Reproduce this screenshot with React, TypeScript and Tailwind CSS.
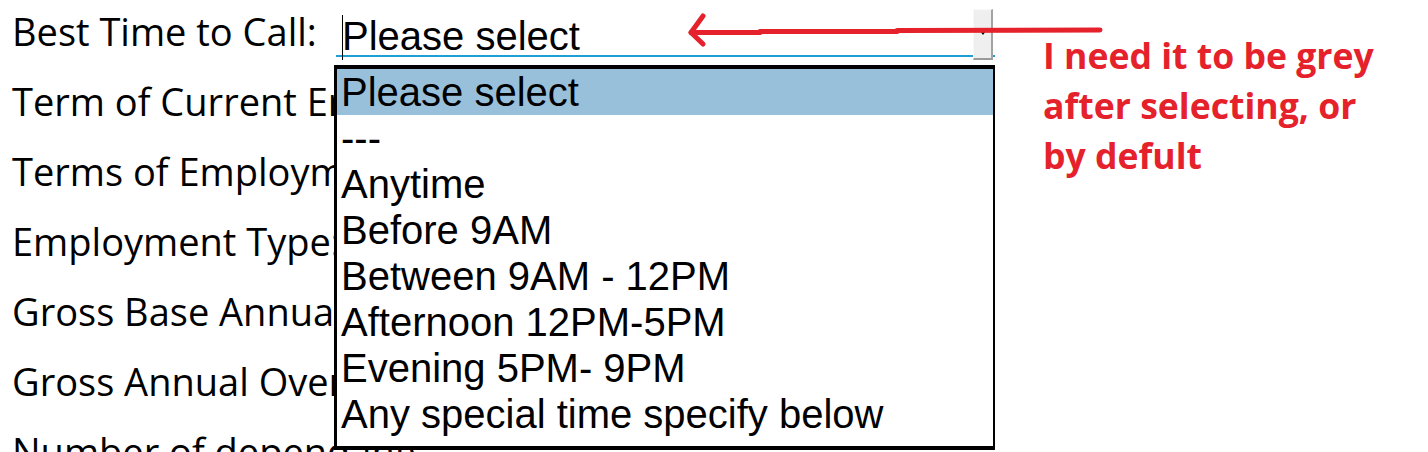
import React from 'react';

const labels = [
  'Best Time to Call:',
  'Term of Current Employment:',
  'Terms of Employment:',
  'Employment Type:',
  'Gross Base Annual Income:',
  'Gross Annual Overtime:',
  'Number of dependants:',
];

const options = [
  'Please select',
  '---',
  'Anytime',
  'Before 9AM',
  'Between 9AM - 12PM',
  'Afternoon 12PM-5PM',
  'Evening 5PM- 9PM',
  'Any special time specify below',
];

const arial = { fontFamily: '"Liberation Sans", Arial, sans-serif' };
const openSans = { fontFamily: '"Open Sans", sans-serif' };

function BestTimeSelect() {
  return (
    <div
      className="flex items-start mt-[12px] w-[659px] h-[49px] box-border pl-[6px] pr-[2px] border-b-2 border-[#1da0d6]"
      style={arial}
    >
      {/* text caret */}
      <div className="w-px h-[45px] mt-[7px] bg-black shrink-0" />
      <div className="flex-1 ml-[-1px] pt-[5px] text-[40px] leading-[46px] text-black whitespace-nowrap">
        Please select
      </div>
      {/* dropdown button */}
      <div className="mt-[1px] w-[20px] h-[51px] shrink-0 box-border bg-[#efefef] border-l border-t border-l-[#f8f8f8] border-t-[#f8f8f8] border-r-2 border-b-2 border-r-[#a3a3a3] border-b-[#9a9a9a] flex items-center justify-center">
        <svg width="6" height="4" viewBox="0 0 6 4" className="mt-[-2px]">
          <path d="M0 0 L6 0 L3 4 Z" fill="#000" />
        </svg>
      </div>
    </div>
  );
}

export default function App() {
  return (
    <div className="relative w-[1428px] h-[452px] overflow-hidden bg-white">
      {/* Form rows */}
      <div className="flex flex-col mt-[-4px]">
        {labels.map((label, i) => (
          <div key={label} className="flex items-start h-[70px]">
            <div
              className="w-[336px] shrink-0 pl-[12px] whitespace-nowrap text-[38px] leading-[70px] text-black"
              style={openSans}
            >
              {label}
            </div>
            {i === 0 && <BestTimeSelect />}
          </div>
        ))}
      </div>

      {/* Open option list */}
      <div
        className="absolute left-[334px] top-[65px] w-[661px] h-[385px] box-border flex flex-col bg-white border-black border-t-4 border-l-[3px] border-r-2 border-b-4"
        style={arial}
      >
        {options.map((opt, i) => (
          <div
            key={opt}
            className={
              'pl-[4px] h-[46px] shrink-0 text-[40px] leading-[46px] text-black whitespace-nowrap ' +
              (i === 0 ? 'bg-[#99c0da]' : '')
            }
          >
            {opt}
          </div>
        ))}
      </div>

      {/* Red annotation arrow */}
      <svg
        className="absolute left-[680px] top-0"
        width="430"
        height="60"
        viewBox="0 0 430 60"
      >
        <g stroke="#e5222b" strokeWidth="5" strokeLinecap="round" fill="none">
          <polyline points="23,16 11,32.5 23,44" strokeLinejoin="round" />
          <line x1="11" y1="32.5" x2="80" y2="32.5" />
          <line x1="80" y1="31.5" x2="217" y2="31.5" />
          <line x1="217" y1="30.5" x2="420" y2="30" />
        </g>
      </svg>

      <div
        className="absolute left-[1043px] top-[30px] text-[35.6px] leading-[50px] font-bold text-[#e5222b] whitespace-nowrap"
        style={openSans}
      >
        <div>I need it to be grey</div>
        <div>after selecting, or</div>
        <div>by defult</div>
      </div>
    </div>
  );
}
